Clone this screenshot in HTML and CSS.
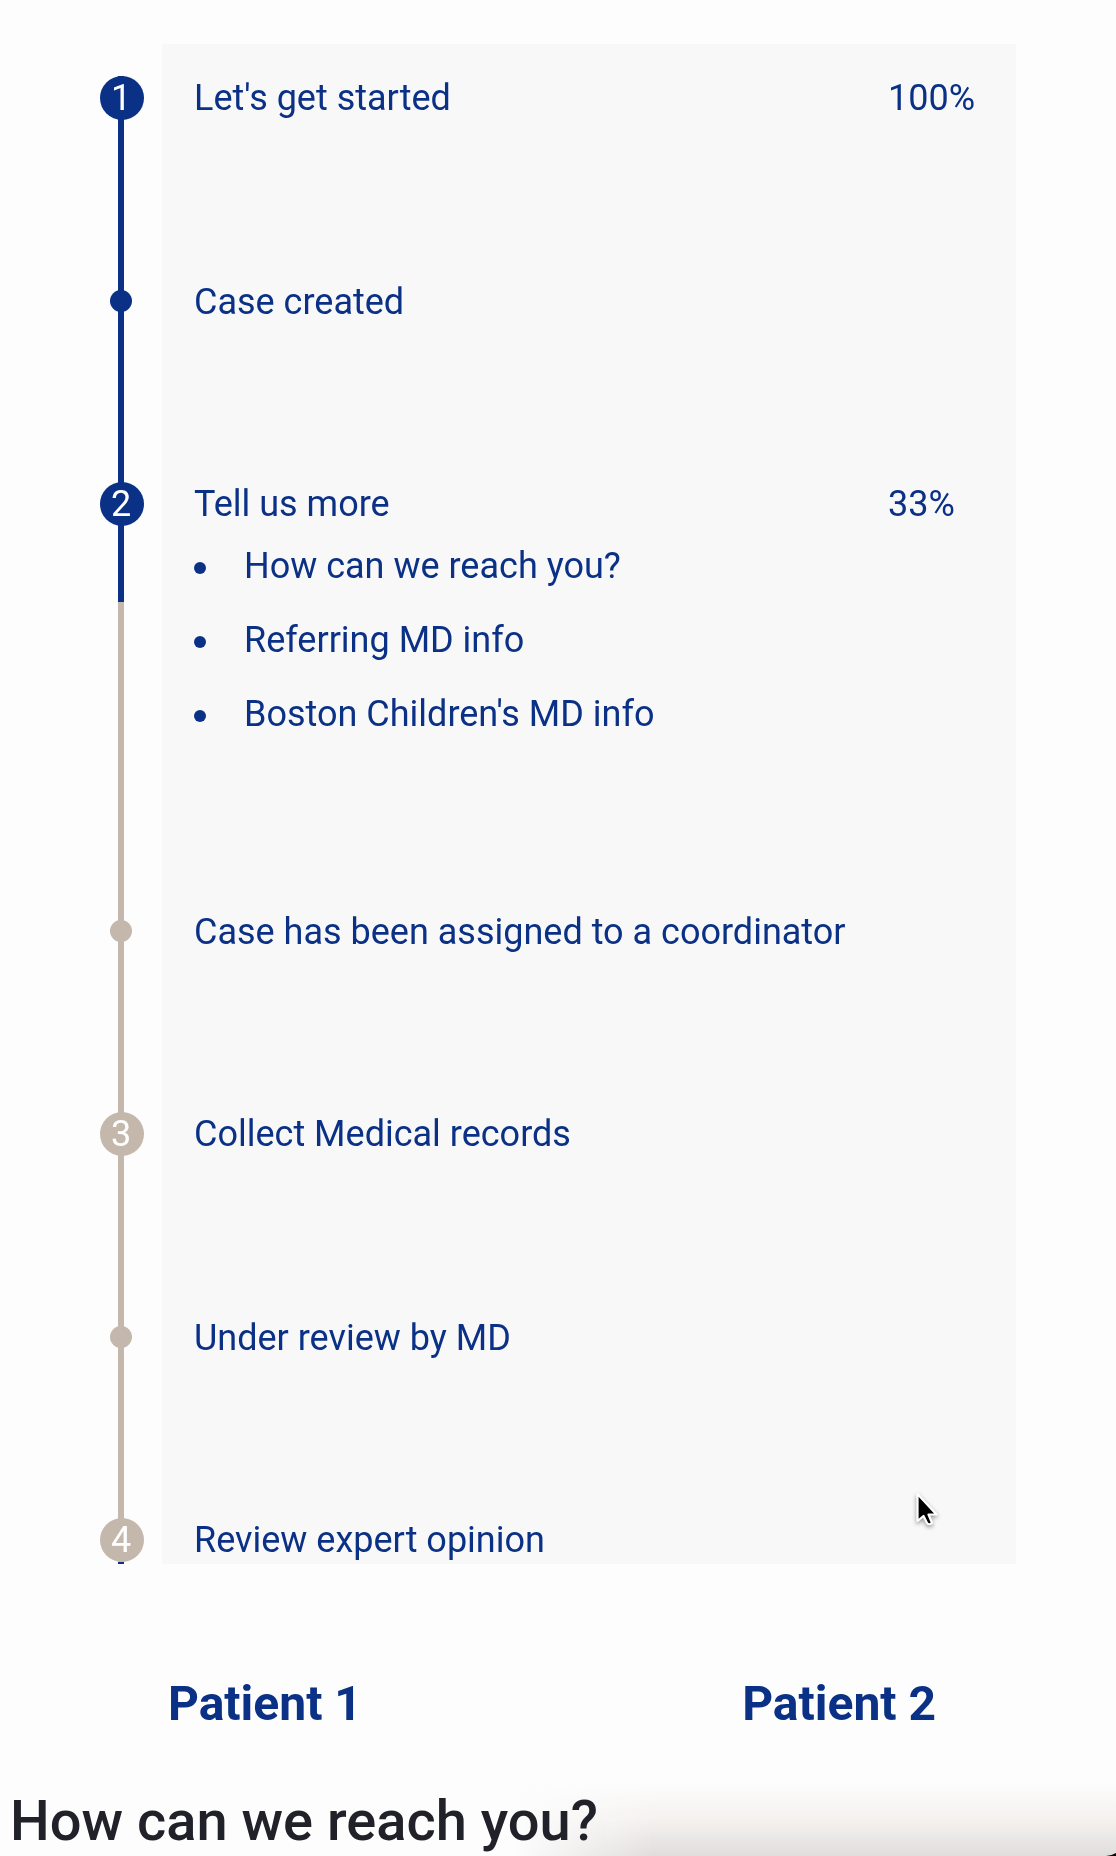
FILE: index.html
```html
<!DOCTYPE html>
<html lang="en">
<head>
  <meta charset="utf-8">
  <meta name="viewport" content="width=device-width, initial-scale=1">
  <title>Case progress</title>
  <link rel="stylesheet" href="styles.css">
</head>
<body>
  <main class="page">
    <ol class="steps">
      <li class="step done">
        <span class="rail"><span class="number">1</span></span>
        <p class="title">Let's get started</p>
        <span class="percent">100%</span>
      </li>
      <li class="step done">
        <span class="rail"><span class="dot"></span></span>
        <p class="title minor">Case created</p>
      </li>
      <li class="step done" style="--progress: 28%">
        <span class="rail"><span class="number">2</span></span>
        <div class="detail">
          <p class="title">Tell us more</p>
          <ul class="tasks">
            <li class="task">How can we reach you?</li>
            <li class="task">Referring MD info</li>
            <li class="task">Boston Children's MD info</li>
          </ul>
        </div>
        <span class="percent">33%</span>
      </li>
      <li class="step">
        <span class="rail"><span class="dot"></span></span>
        <p class="title minor">Case has been assigned to a coordinator</p>
      </li>
      <li class="step">
        <span class="rail"><span class="number">3</span></span>
        <p class="title">Collect Medical records</p>
      </li>
      <li class="step">
        <span class="rail"><span class="dot"></span></span>
        <p class="title minor">Under review by MD</p>
      </li>
      <li class="step last">
        <span class="rail"><span class="number">4</span></span>
        <p class="title">Review expert opinion</p>
      </li>
    </ol>
    <div class="patients">
      <h2 class="patient">Patient 1</h2>
      <h2 class="patient">Patient 2</h2>
    </div>
    <h1 class="question">How can we reach you?</h1>
  </main>
  <div class="shade" aria-hidden="true"></div>
  <svg class="corner" viewBox="0 0 10 3" aria-hidden="true"><path d="M0 3 Q6 2.500 10 0 V3 Z" fill="#120505"/></svg>
  <svg class="pointer" viewBox="0 0 24 38" aria-hidden="true">
    <path d="M2.500 3 V30 L8.500 25 L12 32 Q14 34.500 17 32 L13.500 23.500 H21.500 Z" fill="#000" stroke="#fff" stroke-width="2.200" stroke-linejoin="round"/>
  </svg>
</body>
</html>
```
FILE: styles.css
```css
:root {
  --blue: #0b3186;
  --tan: #c4b7ac;
  --panel: #f8f8f8;
}

* {
  box-sizing: border-box;
  margin: 0;
  padding: 0;
}

body {
  position: relative;
  background: #fdfdfd;
  color: var(--blue);
  font: 36px/44px Roboto, "Liberation Sans", sans-serif;
}

.page {
  padding-top: 44px;
}

/* The panel starts to the right of the rail column. */
.steps {
  margin: 0 100px;
  padding-top: 32px;
  list-style: none;
  background: linear-gradient(var(--panel), var(--panel)) 62px 0 no-repeat;
}

.step {
  --line: var(--tan);
  --progress: 100%;
  display: grid;
  grid-template-columns: 94px 1fr 128px;
  min-height: 203px;
}

.done {
  --line: var(--blue);
}

.last {
  min-height: 46px;
}

.rail {
  background: linear-gradient(var(--line) var(--progress), var(--tan) var(--progress)) 18px 0 / 6px 100% no-repeat;
}

.last .rail {
  background-image: linear-gradient(var(--tan) 44px, var(--blue) 44px);
}

.number {
  display: block;
  width: 44px;
  height: 44px;
  padding-right: 2px;
  border-radius: 50%;
  background: var(--line);
  color: #fff;
  text-align: center;
}

.dot {
  display: block;
  width: 22px;
  height: 22px;
  margin: 11px 10px;
  border-radius: 50%;
  background: var(--line);
}

.minor {
  grid-column: 2 / -1;
  line-height: 46px;
}

.detail {
  padding-bottom: 173px;
}

.tasks {
  display: grid;
  gap: 30px;
  margin-top: 18px;
  list-style: none;
}

.task {
  display: flex;
  align-items: center;
  gap: 38px;
}

.task::before {
  content: "";
  width: 12px;
  height: 12px;
  margin-top: 4px;
  border-radius: 50%;
  background: var(--blue);
}

.patients {
  display: flex;
  justify-content: space-between;
  margin-top: 112px;
  padding: 0 180px 0 168px;
}

.patient {
  font-size: 48px;
  line-height: 56px;
  font-weight: 700;
}

.question {
  margin-top: 57px;
  padding-left: 10px;
  color: #212129;
  font-size: 56px;
  line-height: 64px;
  font-weight: 500;
}

/* Soft shadow rising from the lower edge of the window. */
.shade {
  position: fixed;
  z-index: -1;
  right: 0;
  bottom: 0;
  width: 54%;
  height: 72px;
  background: linear-gradient(to top, #e0dedd, #f4f1ef 50%, #fdfdfd00);
  mask-image: linear-gradient(to right, transparent, #000 140px);
}

.corner {
  position: fixed;
  right: 0;
  bottom: 0;
  width: 10px;
  height: 3px;
}

.pointer {
  position: absolute;
  top: 1491px;
  left: 915px;
  width: 24px;
  height: 38px;
  filter: drop-shadow(0 2px 2px #0006);
}
```
